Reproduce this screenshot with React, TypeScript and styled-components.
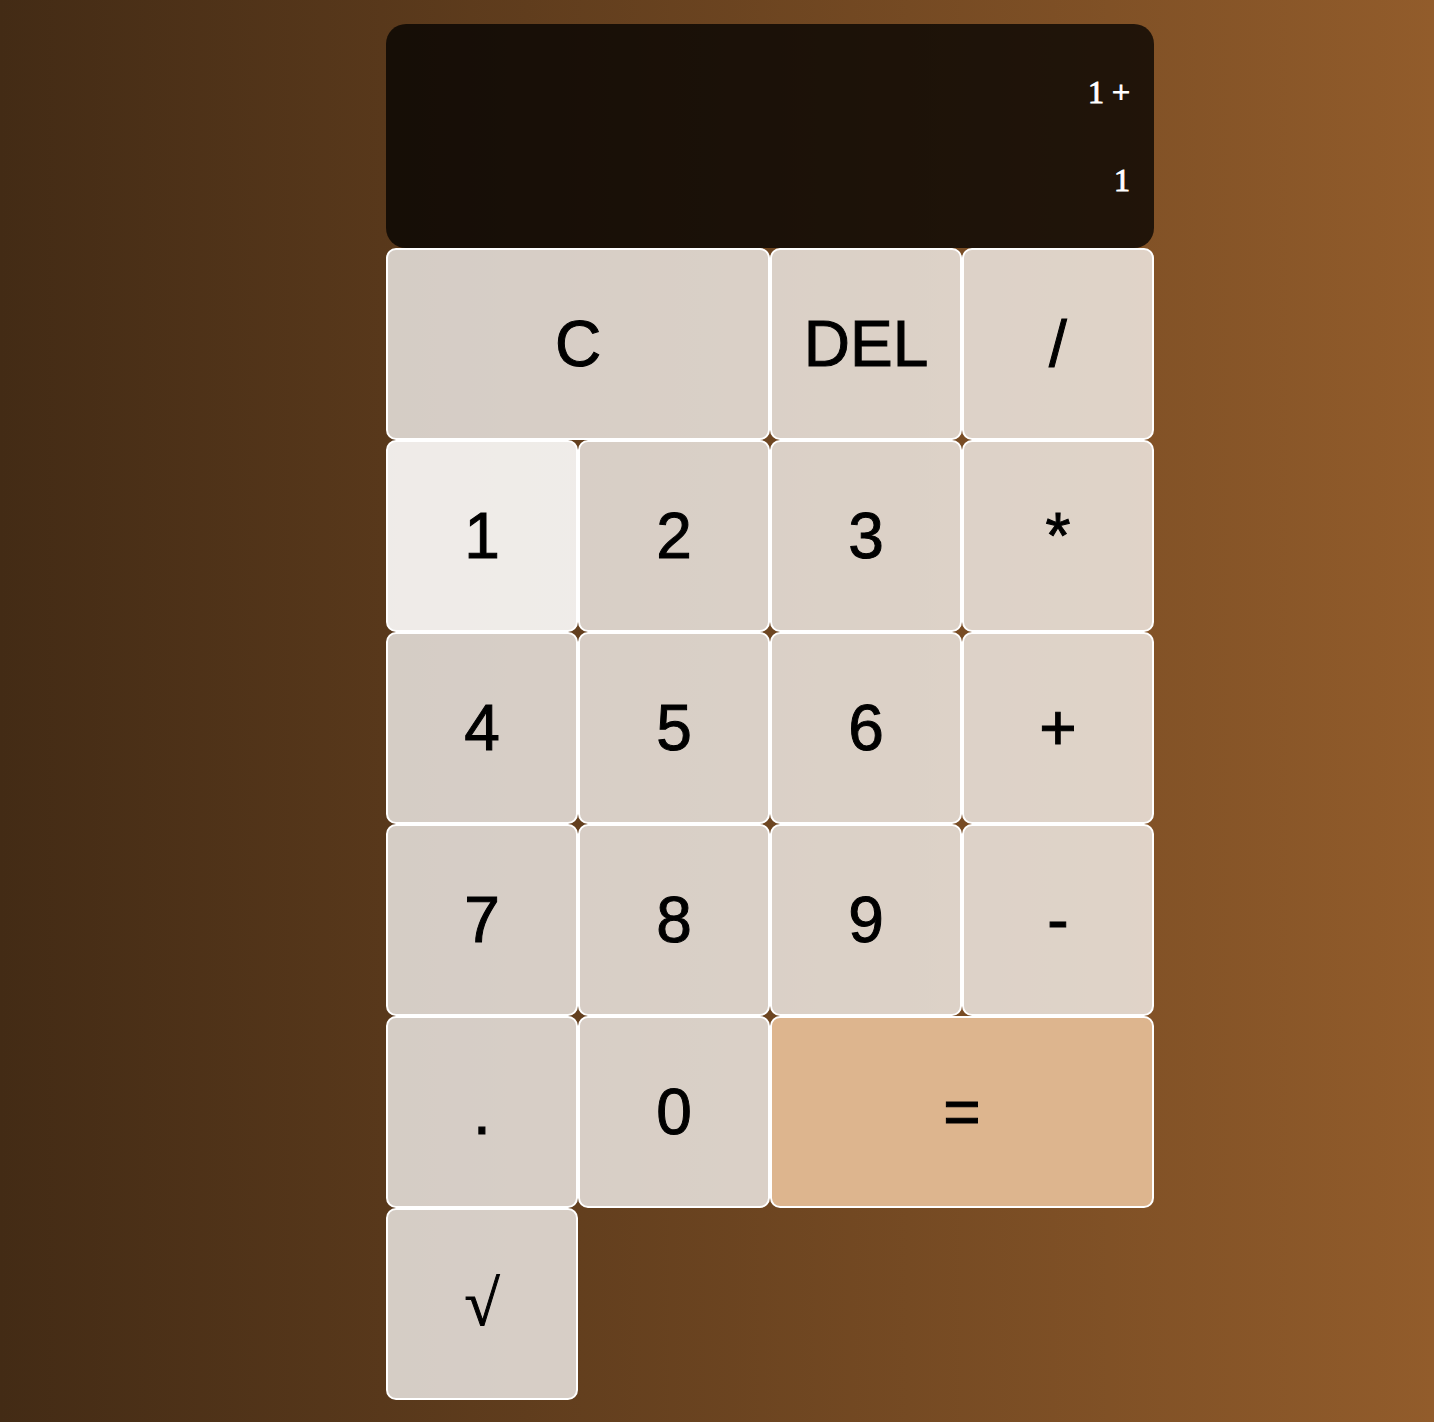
import React from "react";
import styled, { createGlobalStyle } from "styled-components";

const GlobalStyle = createGlobalStyle`
  *, *::before, *::after {
    box-sizing: border-box;
  }

  body {
    margin: 0;
    min-height: 100vh;
    background: linear-gradient(to right, #432b15, #925c2b);
  }
`;

const Page = styled.main`
  display: flex;
  justify-content: center;
  min-height: 100vh;
  padding: 24px 0 22px 106px;
`;

const Calculator = styled.section`
  display: grid;
  grid-template-columns: repeat(4, 192px);
  grid-template-rows: 224px;
  grid-auto-rows: 192px;
  align-content: start;
`;

const Display = styled.div`
  grid-column: 1 / -1;
  display: flex;
  flex-direction: column;
  justify-content: space-around;
  align-items: flex-end;
  padding: 24px;
  border-radius: 20px;
  background: rgba(0, 0, 0, 0.75);
  color: #fff;
  font-family: "Liberation Serif", "Times New Roman", serif;
  font-size: 32px;
  line-height: 36px;
  -webkit-text-stroke: 1px #fff;
`;

const Readout = styled.output`
  display: block;
`;

type Tone = "plain" | "active" | "accent";

const tones: Record<Tone, string> = {
  plain: "rgba(255, 255, 255, 0.75)",
  active: "rgba(255, 255, 255, 0.9)",
  accent: "#ddb58e",
};

const Key = styled.button<{ $span?: number; $tone?: Tone; $serif?: boolean }>`
  grid-column: span ${({ $span = 1 }) => $span};
  padding: 0;
  border: 2px solid #fff;
  border-radius: 10px;
  background: ${({ $tone = "plain" }) => tones[$tone]};
  color: #000;
  font-family: ${({ $serif }) =>
    $serif
      ? '"Liberation Serif", "Times New Roman", serif'
      : '"Liberation Sans", Arial, sans-serif'};
  font-size: 64px;
  -webkit-text-stroke: 1px #000;
  cursor: pointer;
`;

const keys: { label: string; span?: number; tone?: Tone; serif?: boolean }[] = [
  { label: "C", span: 2 },
  { label: "DEL" },
  { label: "/" },
  { label: "1", tone: "active" },
  { label: "2" },
  { label: "3" },
  { label: "*" },
  { label: "4" },
  { label: "5" },
  { label: "6" },
  { label: "+" },
  { label: "7" },
  { label: "8" },
  { label: "9" },
  { label: "-" },
  { label: "." },
  { label: "0" },
  { label: "=", span: 2, tone: "accent" },
  { label: "√", serif: true },
];

export default function App() {
  return (
    <>
      <GlobalStyle />
      <Page>
        <Calculator>
          <Display>
            <Readout>1 +</Readout>
            <Readout>1</Readout>
          </Display>
          {keys.map(({ label, span, tone, serif }) => (
            <Key key={label} type="button" $span={span} $tone={tone} $serif={serif}>
              {label}
            </Key>
          ))}
        </Calculator>
      </Page>
    </>
  );
}
